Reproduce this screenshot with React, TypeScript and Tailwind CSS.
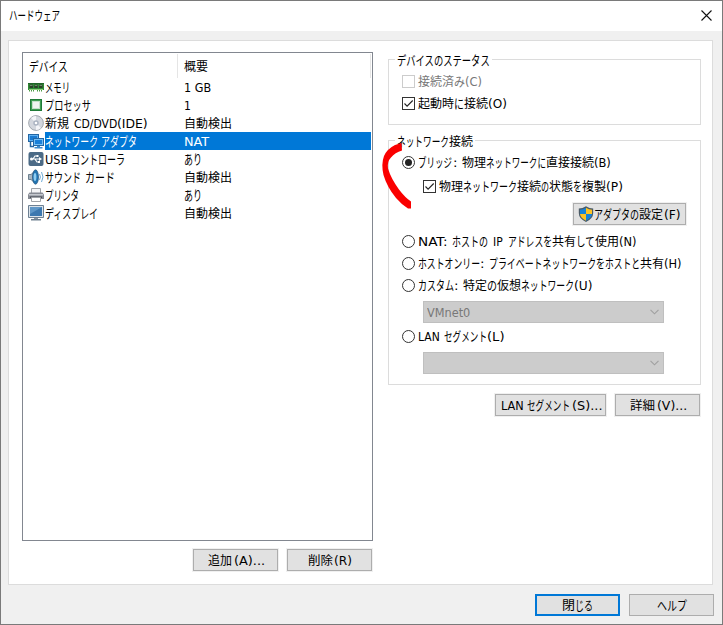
import { useLayoutEffect, useRef, useState, type ReactNode } from "react";

type Segment = [text: string, width: number];

const KANA = /^[\u3040-\u30ff]+$/;

// One run of text condensed or widened to an exact advance width.
function Run({ text, width }: { text: string; width: number }) {
  const ref = useRef<HTMLSpanElement>(null);
  const [scale, setScale] = useState(1);
  useLayoutEffect(() => {
    if (ref.current) setScale(width / ref.current.offsetWidth);
  }, [text, width]);
  return (
    <span className={`block shrink-0 whitespace-nowrap ${KANA.test(text) ? "text-[13px] leading-[18px]" : ""}`} style={{ width }}>
      <span ref={ref} className="inline-block origin-left" style={{ transform: `scaleX(${scale})` }}>
        {text}
      </span>
    </span>
  );
}

function Line({ parts, className = "" }: { parts: Segment[]; className?: string }) {
  return (
    <span className={`flex h-[18px] items-center leading-[18px] ${className}`}>
      {parts.map(([text, width], i) =>
        text === "" ? (
          <span key={i} className="shrink-0" style={{ width }} />
        ) : (
          <Run key={i} text={text} width={width} />
        )
      )}
    </span>
  );
}

const MemoryIcon = () => (
  <svg width="16" height="16" viewBox="0 0 16 16">
    <path d="M0 4h16v7H0z" fill="#2f8a35" />
    <path d="M0 4h16v1H0z" fill="#1e6427" />
    <path d="M1.500 5.500h3.500V9H1.500zM6.250 5.500h3.500V9h-3.500zM11 5.500h3.500V9H11z" fill="#2a3f2a" />
    <path d="M2 6h2.500v1H2zM6.750 6h2.500v1h-2.500zM11.500 6H14v1h-2.500z" fill="#6b8a68" />
    <path d="M1 10h14v1H1z" fill="#8fd07e" />
    <path d="M1.500 11v1.500M3.500 11v1.500M5.500 11v1.500M9.500 11v1.500M11.500 11v1.500M13.500 11v1.500" stroke="#4a9a43" />
  </svg>
);
const CpuIcon = () => (
  <svg width="16" height="16" viewBox="0 0 16 16">
    <path d="M2 2h12v12H2z" fill="#1f7a37" />
    <path d="M3 3h10v10H3z" fill="#3f9d52" />
    <path d="M4 4h8v8H4z" fill="#c5dfc8" />
    <path d="M5 5h6v6H5z" fill="#f0f4f0" />
  </svg>
);
const DiscIcon = () => (
  <svg width="16" height="16" viewBox="0 0 16 16">
    <circle cx="8" cy="8" r="7.400" fill="#d3d7de" stroke="#9298a0" strokeWidth=".8" />
    <path d="M8 8 3 3a7 7 0 0 1 5-2zM8 8l5 5a7 7 0 0 1-5 2z" fill="#f4f5f8" />
    <circle cx="8" cy="8" r="2.700" fill="#a9b2c0" />
    <circle cx="8" cy="8" r="1.300" fill="#fff" />
  </svg>
);
const NetworkIcon = () => (
  <svg width="16" height="16" viewBox="0 0 16 16">
    <path d="M0 1h11v8H0z" fill="#2467a4" />
    <path d="M1 2h9v6H1z" fill="#5fb0f0" />
    <path d="M2 3h7v4H2z" fill="#1a7ad0" />
    <path d="M2.500 9v4.500H6" fill="none" stroke="#2467a4" strokeWidth="1.500" />
    <path d="M5 5h11v8H5z" fill="#2467a4" />
    <path d="M6 6h9v6H6z" fill="#74bff6" />
    <path d="M7 7h7v4H7z" fill="#1a80d8" />
    <path d="M9 13h3v1H9zM6.500 14h8v1.500h-8z" fill="#3f8ccc" />
  </svg>
);
const UsbIcon = () => (
  <svg width="16" height="16" viewBox="0 0 16 16">
    <rect x=".5" y="1" width="15" height="14" rx="2" fill="#4b6a86" />
    <path d="M3 8h9M5 8l2-3h2M7 8l2 3h2" fill="none" stroke="#fff" strokeWidth="1.200" />
    <circle cx="3.500" cy="8" r="1.500" fill="#fff" />
    <path d="m11 6 3 2-3 2zM8.500 4h2v2h-2zM10 10h2v2h-2z" fill="#fff" />
  </svg>
);
const SoundIcon = () => (
  <svg width="16" height="16" viewBox="0 0 16 16">
    <path d="M.5 5.500H3L8 1v14l-5-4.500H.5z" fill="#a9b6c1" stroke="#53697b" strokeWidth=".8" />
    <ellipse cx="7.500" cy="8" rx="3" ry="7.200" fill="#2275b3" stroke="#25557d" strokeWidth=".7" />
    <ellipse cx="7" cy="8" rx="1.400" ry="4" fill="#8dccf1" />
    <path d="M11.500 5q1.800 3 0 6M13.500 3q3 5 0 10" fill="none" stroke="#6eabd6" />
  </svg>
);
const PrinterIcon = () => (
  <svg width="16" height="16" viewBox="0 0 16 16">
    <path d="M3.500 1.500h9v5h-9z" fill="#f5f5f7" stroke="#a0a3a8" />
    <path d="M1.500 5.500h13L16 7.500V12H0V7.500z" fill="#868a93" />
    <path d="M1 7h14v1.500H1z" fill="#c5c8ce" />
    <path d="M2 9.500h12V11H2z" fill="#4a4e57" />
    <path d="M3.500 10.500h9v4h-9z" fill="#fff" stroke="#a0a3a8" />
  </svg>
);
const DisplayIcon = () => (
  <svg width="16" height="16" viewBox="0 0 16 16">
    <path d="M.5.500h15v12H.5z" fill="#dbe3ea" stroke="#6d8093" />
    <path d="M2 2h12v9H2z" fill="#3c78b0" />
    <path d="M2 2h12L2 9z" fill="#5f97c8" />
    <path d="M6 13h4v1H6z" fill="#8794a2" />
    <path d="M3 14h10v1.500H3z" fill="#6e8091" />
  </svg>
);
const ShieldIcon = () => (
  <svg width="16" height="16" viewBox="0 0 16 16" className="-ml-px">
    <path d="M8 .3Q11.500 2.600 15.200 2.600V7q0 5.700-7.200 8.900Q.8 12.700.8 7V2.600Q4.500 2.600 8 .3z" fill="#4a5a66" />
    <path d="M8 1.700V8H2V3.700q3.100-.2 6-2zM8 8h6q-.5 4.200-6 6.700z" fill="#1683d8" />
    <path d="M8 1.700Q11 3.500 14 3.700V8H8zM2 8h6v6.700Q2.500 12.200 2 8z" fill="#fcc324" />
  </svg>
);

const devices: { icon: ReactNode; name: Segment[]; value: Segment[]; selected?: boolean }[] = [
  { icon: <MemoryIcon />, name: [["メモリ", 25]], value: [["1 GB", 27]] },
  { icon: <CpuIcon />, name: [["プロセッサ", 46]], value: [["1", 7]] },
  { icon: <DiscIcon />, name: [["新規", 24], ["", 5], ["CD/DVD", 43], ["(IDE)", 31]], value: [["自動検出", 48]] },
  { icon: <NetworkIcon />, name: [["ネットワーク", 53], ["", 3], ["アダプタ", 36]], value: [["NAT", 25]], selected: true },
  { icon: <UsbIcon />, name: [["USB", 23], ["", 3], ["コントローラ", 54]], value: [["あり", 18]] },
  { icon: <SoundIcon />, name: [["サウンド", 36], ["", 4], ["カード", 30]], value: [["自動検出", 48]] },
  { icon: <PrinterIcon />, name: [["プリンタ", 34]], value: [["あり", 18]] },
  { icon: <DisplayIcon />, name: [["ディスプレイ", 53]], value: [["自動検出", 48]] },
];

function Button({ parts, className, icon, primary }: { parts: Segment[]; className: string; icon?: ReactNode; primary?: boolean }) {
  return (
    <button
      className={`flex h-[22px] shrink-0 items-center justify-center bg-[#e1e1e1] shadow-[0_0_0_1px_#f0f0f0] ${
        primary ? "border-2 border-[#0078d7]" : "border border-[#adadad]"
      } ${className}`}
    >
      {icon}
      <Line parts={parts} className="translate-y-px" />
    </button>
  );
}

function Check({ parts, checked, disabled, className = "" }: { parts: Segment[]; checked?: boolean; disabled?: boolean; className?: string }) {
  return (
    <label className={`flex h-[21px] items-center ${disabled ? "text-[#787878]" : ""} ${className}`}>
      <span className={`mr-[3px] h-[13px] w-[13px] border bg-white ${disabled ? "border-[#cccccc]" : "border-[#333333]"}`}>
        {checked && (
          <svg width="11" height="11" viewBox="0 0 11 11" className="block">
            <path d="m1.500 5.500 2.600 2.700L9.700 2.500" fill="none" stroke="#222" strokeWidth="1.100" />
          </svg>
        )}
      </span>
      <Line parts={parts} />
    </label>
  );
}

function Radio({ parts, checked, className = "" }: { parts: Segment[]; checked?: boolean; className?: string }) {
  return (
    <label className={`ml-[13px] flex h-[21px] items-center ${className}`}>
      <span className="mr-[3px] flex h-[13px] w-[13px] items-center justify-center rounded-full border border-[#333333] bg-white">
        {checked && <span className="h-[7px] w-[7px] rounded-full bg-[#222222]" />}
      </span>
      <Line parts={parts} />
    </label>
  );
}

function Combo({ parts = [], className }: { parts?: Segment[]; className: string }) {
  return (
    <div className={`ml-[34px] flex h-[22px] w-[241px] items-center justify-between border border-[#bfbfbf] bg-[#cccccc] pl-[3px] pr-[4px] text-[#787878] ${className}`}>
      <Line parts={parts} className="translate-y-px" />
      <svg width="9" height="6" viewBox="0 0 9 6">
        <path d="m.5.800 4 4 4-4" fill="none" stroke="#a0a0a0" strokeWidth="1.100" />
      </svg>
    </div>
  );
}

function Legend({ parts }: { parts: Segment[] }) {
  return <Line parts={parts} className="-mt-[8px] ml-[6px] w-fit bg-white px-[2px]" />;
}

export default function App() {
  return (
    <div className="relative flex h-[625px] w-[723px] flex-col overflow-hidden border border-[#7a7a7a] bg-[#f0f0f0] font-['DejaVu_Sans_Condensed','DejaVu_Sans','Noto_Sans_CJK_JP',sans-serif] text-[12px] text-black">
      <header className="flex h-[30px] shrink-0 items-center justify-between bg-white pl-[8px] pr-[10px]">
        <Line parts={[["ハードウェア", 51]]} />
        <svg width="11" height="11" viewBox="0 0 11 11" className="-translate-y-px">
          <path d="m.5.500 10 10m0-10-10 10" stroke="#111" strokeWidth="1.100" />
        </svg>
      </header>

      <main className="ml-[7px] mt-[9px] flex h-[545px] w-[705px] shrink-0 gap-[15px] border border-[#dcdcdc] bg-white pl-[13px]">
        <section className="mt-[11px] w-[351px] shrink-0">
          <div className="h-[489px] border border-[#828790] px-px pt-px">
            <div className="flex h-[24px] border-r border-[#e5e5e5]">
              <div className="flex w-[154px] items-center border-r border-[#e5e5e5] pl-[5px]">
                <Line parts={[["デバイス", 39]]} className="translate-y-px" />
              </div>
              <div className="flex items-center pl-[6px]">
                <Line parts={[["概要", 24]]} className="translate-y-px" />
              </div>
            </div>
            {devices.map((d, i) => (
              <div key={i} className="flex h-[18px] items-center pl-[4px]">
                <span className="mr-px h-[16px] w-[16px] shrink-0">{d.icon}</span>
                <div className={`flex flex-1 ${d.selected ? "bg-[#0078d7] text-white" : ""}`}>
                  <span className="w-[139px]">
                    <Line parts={d.name} className="translate-y-px" />
                  </span>
                  <Line parts={d.value} className="translate-y-px" />
                </div>
              </div>
            ))}
          </div>
          <div className="mt-[8px] flex justify-end gap-[9px] pr-px">
            <Button className="w-[85px]" parts={[["追加", 24], ["(A)...", 31]]} />
            <Button className="w-[85px]" parts={[["削除", 25], ["(R)", 18]]} />
          </div>
        </section>

        <section className="mt-[18px] w-[313px] shrink-0">
          <div className="h-[66px] border border-[#dcdcdc]">
            <Legend parts={[["デバイスのステータス", 93]]} />
            <Check disabled className="ml-[13px] mt-px" parts={[["接続済", 36], ["み", 11], ["(C)", 17]]} />
            <Check checked className="ml-[13px] mt-px" parts={[["起動時", 36], ["に", 10], ["接続", 24], ["(O)", 19]]} />
          </div>

          <div className="mt-[15px] h-[245px] border border-[#dcdcdc]">
            <Legend parts={[["ネットワーク", 52], ["接続", 24]]} />
            <Radio checked className="mt-px" parts={[["ブリッジ", 34], ["", 1], [":", 5], ["", 4], ["物理", 24], ["ネットワークに", 60], ["直接接続", 48], ["(B)", 17]]} />
            <Check checked className="ml-[34px] mt-[3px]" parts={[["物理", 24], ["ネットワーク", 54], ["接続", 24], ["の", 8], ["状態", 24], ["を", 9], ["複製", 24], ["(P)", 17]]} />
            <Button className="ml-[184px] mt-[6px] w-[113px]" icon={<ShieldIcon />} parts={[["アダプタの", 45], ["設定", 24], ["(F)", 17]]} />
            <Radio className="mt-[6px]" parts={[["NAT:", 29], ["", 5], ["ホストの", 36], ["", 5], ["IP", 10], ["", 5], ["アドレスを", 44], ["共有", 24], ["して", 19], ["使用", 24], ["(N)", 18]]} />
            <Radio className="mt-px" parts={[["ホストオンリー", 62], [":", 5], ["", 4], ["プライベートネットワークを", 116], ["ホストと", 35], ["共有", 24], ["(H)", 18]]} />
            <Radio className="mt-px" parts={[["カスタム", 36], [":", 5], ["", 4], ["特定", 24], ["の", 10], ["仮想", 24], ["ネットワーク", 53], ["(U)", 18]]} />
            <Combo className="mt-[5px]" parts={[["VMnet0", 43]]} />
            <Radio className="mt-[3px]" parts={[["LAN", 22], ["", 4], ["セグメント", 43], ["(L)", 17]]} />
            <Combo className="mt-[5px]" />
          </div>

          <div className="mt-[9px] flex justify-end gap-[9px] pr-px">
            <Button className="w-[111px]" parts={[["LAN", 23], ["", 3], ["セグメント", 43], ["(S)...", 31]]} />
            <Button className="w-[85px]" parts={[["詳細", 25], ["(V)...", 30]]} />
          </div>
        </section>
      </main>

      <footer className="mt-[9px] flex justify-end gap-[9px] pr-[8px]">
        <Button primary className="w-[85px]" parts={[["閉", 13], ["じる", 18]]} />
        <Button className="w-[85px]" parts={[["ヘルプ", 30]]} />
      </footer>

      {/* Hand-drawn marker over the bridged option */}
      <svg className="pointer-events-none absolute left-[379px] top-[139px]" width="36" height="72" viewBox="380 140 36 72">
        <path
          d="M401.500 143 395 145Q387 149 384 156 381 164 383.500 175 387 187 396 198 402 205 408 208.500L411 208.500v-7q-6-4-12-12-8-11-11-21-1-7 3-11 4-5 11-7z"
          fill="#fa0000"
        />
      </svg>
    </div>
  );
}
